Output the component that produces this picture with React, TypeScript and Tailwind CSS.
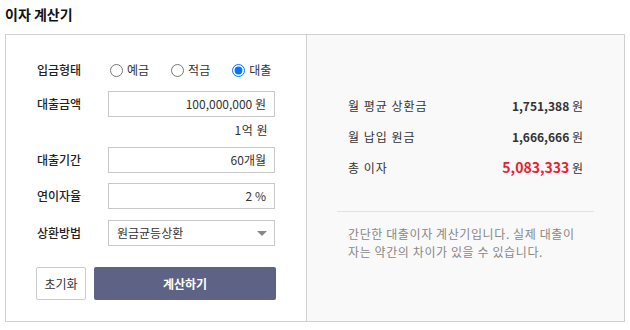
import { useState } from "react";

const font = { fontFamily: '"Noto Sans CJK KR", "Noto Sans", sans-serif' };

function Field({ label, children }: { label: string; children: React.ReactNode }) {
  return (
    <div className="flex items-center">
      <span className="w-[71px] text-[12px] font-medium text-[#222]">{label}</span>
      {children}
    </div>
  );
}

function Radio({ label, checked, onChange }: { label: string; checked: boolean; onChange: () => void }) {
  return (
    <label className="flex items-center gap-[4px] text-[12px] text-[#333]">
      <input type="radio" name="kind" checked={checked} onChange={onChange} className="m-0 h-[13px] w-[13px] accent-[#0075ff]" />
      {label}
    </label>
  );
}

export default function App() {
  const [kind, setKind] = useState("대출");

  return (
    <div className="px-[5px] pt-[4px]" style={font}>
      <h1 className="text-[14px] font-bold leading-[20px] text-[#111]">이자 계산기</h1>

      <div className="mt-[10px] flex h-[288px] w-[620px] border border-[#d0d0d0]">
        {/* Form */}
        <div className="w-[301px] border-r border-[#d0d0d0] bg-white pl-[31px] pr-[30px] pt-[22px]">
          <Field label="입금형태">
            <div className="flex h-[26px] items-center gap-[22px] pl-[2px]">
              {["예금", "적금", "대출"].map((k) => (
                <Radio key={k} label={k} checked={kind === k} onChange={() => setKind(k)} />
              ))}
            </div>
          </Field>

          <div className="mt-[8px]">
            <Field label="대출금액">
              <div className="flex h-[26px] w-[167px] items-center justify-end border border-[#c8c8c8] px-[8px] text-[12px] text-[#333]">
                100,000,000 원
              </div>
            </Field>
            <div className="mt-[2px] pr-[8px] text-right text-[12px] leading-[22px] tracking-[0.5px] text-[#333]">1억 원</div>
          </div>

          <div className="mt-[6px] flex flex-col gap-[10px]">
            <Field label="대출기간">
              <div className="flex h-[26px] w-[167px] items-center justify-end border border-[#c8c8c8] px-[8px] text-[12px] text-[#333]">
                60개월
              </div>
            </Field>
            <Field label="연이자율">
              <div className="flex h-[26px] w-[167px] items-center justify-end border border-[#c8c8c8] px-[8px] text-[12px] text-[#333]">
                2 %
              </div>
            </Field>
            <Field label="상환방법">
              <div className="mt-[1px] flex h-[26px] w-[167px] items-center justify-between border border-[#c8c8c8] pl-[8px] pr-[7px] text-[12px] text-[#333]">
                <span>원금균등상환</span>
                <span className="h-0 w-0 border-x-[5px] border-t-[5px] border-x-transparent border-t-[#888]" />
              </div>
            </Field>
          </div>

          <div className="-ml-[1px] mt-[21px] flex gap-[8px]">
            <button className="h-[33px] w-[50px] rounded-[2px] border border-[#ccc] bg-white text-[12px] text-[#333]">초기화</button>
            <button className="h-[33px] flex-1 rounded-[2px] bg-[#5e6386] text-[12px] font-bold text-white">계산하기</button>
          </div>
        </div>

        {/* Result */}
        <div className="flex-1 bg-[#f9f9f9] px-[30px] pt-[55px]">
          <div className="px-[11px] text-[12px] text-[#333]">
            <div className="flex h-[31px] items-center justify-between">
              <span className="tracking-[1px]">월 평균 상환금</span>
              <span><b className="font-bold">1,751,388</b> 원</span>
            </div>
            <div className="flex h-[31px] items-center justify-between">
              <span className="tracking-[1px]">월 납입 원금</span>
              <span><b className="font-bold">1,666,666</b> 원</span>
            </div>
            <div className="flex h-[31px] items-center justify-between">
              <span className="tracking-[1px]">총 이자</span>
              <span><b className="text-[14px] font-bold text-[#e8202f]">5,083,333</b> 원</span>
            </div>
          </div>
          <div className="mt-[28px] border-t border-[#e2e2e2] px-[11px] pt-[13px] text-[12px] leading-[18px] tracking-[0.6px] break-all text-[#888]">
            간단한 대출이자 계산기입니다. 실제 대출이자는 약간의 차이가 있을 수 있습니다.
          </div>
        </div>
      </div>
    </div>
  );
}
